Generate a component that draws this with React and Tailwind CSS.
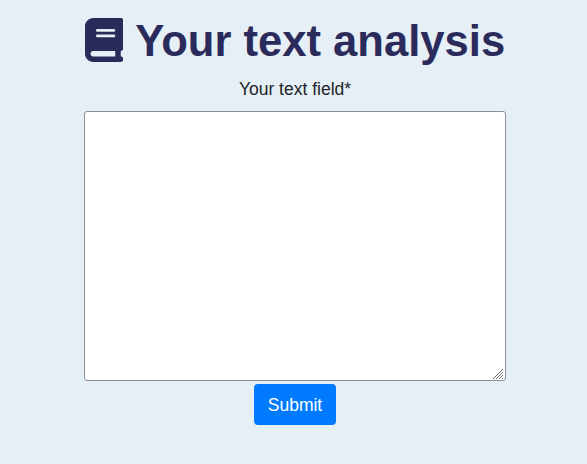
import React from "react";
import { FaBook } from "react-icons/fa6";

function ResizeGrip() {
  return (
    <svg viewBox="0 0 12 12" className="pointer-events-none absolute bottom-[1px] right-[2px] h-[12px] w-[12px] bg-white" fill="none" stroke="#666" strokeWidth="1">
      <path d="M1 11 11 1M4 11 11 4M7 11 11 7M10 11 11 10" />
    </svg>
  );
}

export default function App() {
  return (
    <main className="flex h-[464px] flex-col items-center bg-[#e6eff6] pl-[3px] font-['Liberation_Sans',Arial,sans-serif] text-[#212529]">
      <h1 className="mt-[15px] flex h-[53px] items-center whitespace-nowrap text-[43.6px] font-bold leading-[53px] text-[#2b2b5b]">
        <FaBook className="mb-[4px] mr-[12px] h-[44px] w-[38.5px]" />
        <span>Your text analysis</span>
      </h1>
      <label htmlFor="text" className="mt-[8px] h-[35px] text-[17.5px] leading-[26px]">Your text field*</label>
      <div className="relative">
        <textarea id="text" className="block h-[270px] w-[422px] resize-none rounded-[3px] border border-[#8f8f9d] bg-white p-[2px]" />
        <ResizeGrip />
      </div>
      <button className="mt-[3px] h-[41px] w-[82px] rounded-[4px] bg-[#007bff] text-[17.5px] leading-[26px] text-white">Submit</button>
    </main>
  );
}
